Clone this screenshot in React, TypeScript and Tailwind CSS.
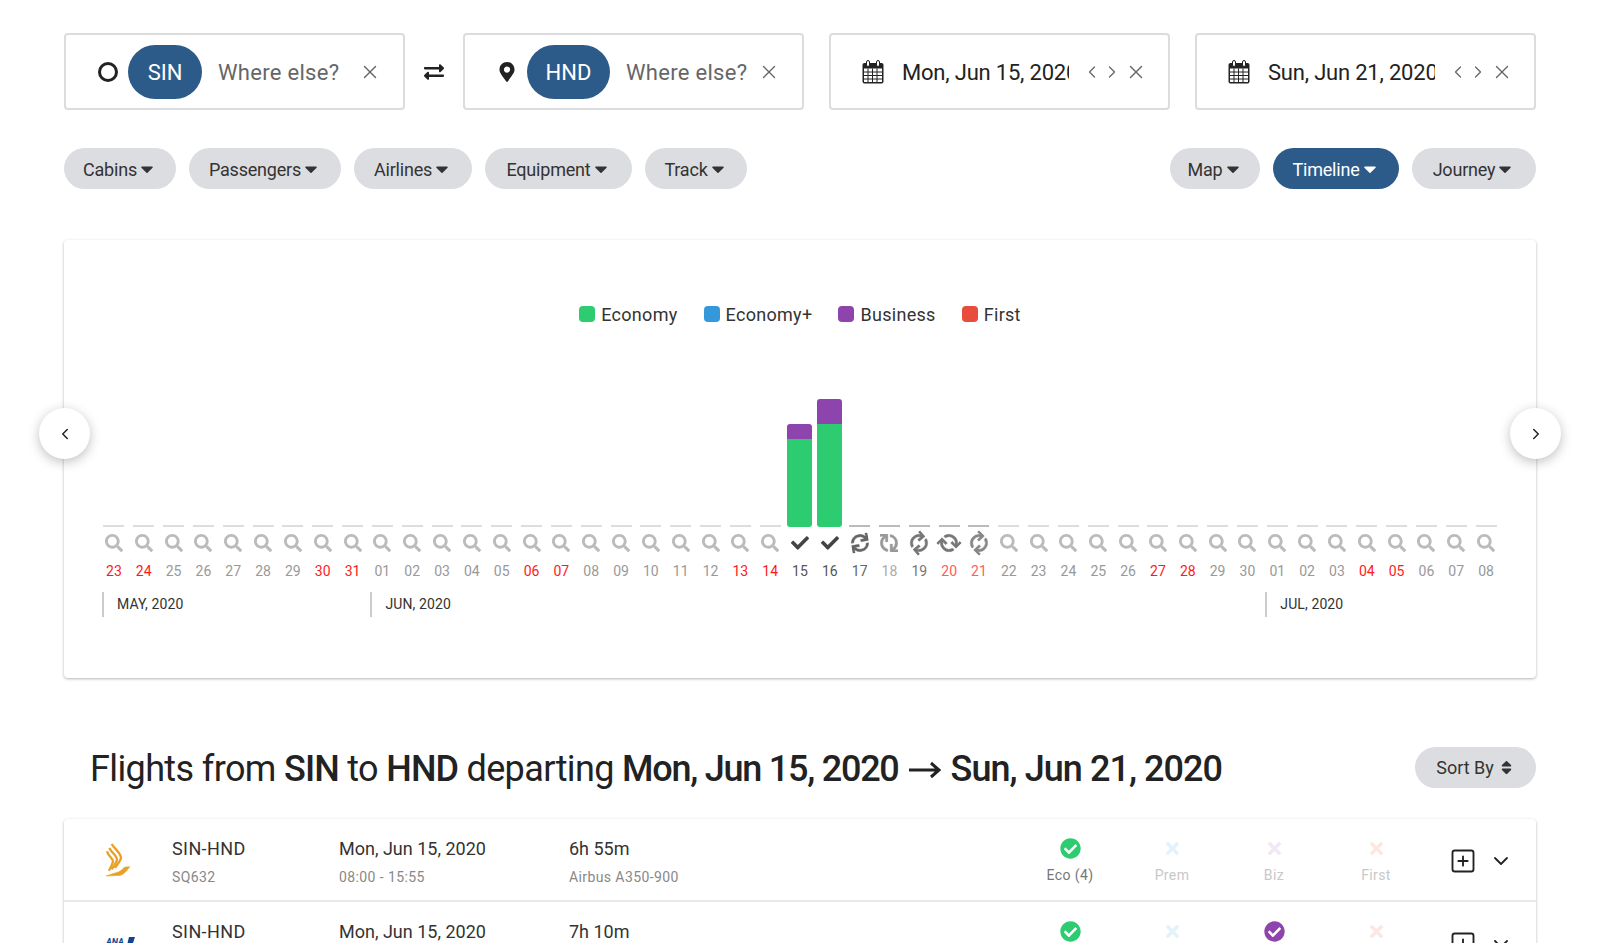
import { ChevronDown, ChevronLeft, ChevronRight, SquarePlus, X } from "lucide-react";
import {
  FaCaretDown,
  FaCheck,
  FaCheckCircle,
  FaExchangeAlt,
  FaMapMarkerAlt,
  FaSearch,
  FaSort,
  FaSync,
  FaTimes,
} from "react-icons/fa";

const may = ["23", "24", "25", "26", "27", "28", "29", "30", "31"];
const jun = Array.from({ length: 30 }, (_, i) => String(i + 1).padStart(2, "0"));
const jul = ["01", "02", "03", "04", "05", "06", "07", "08"];

// weekend columns, counted from May 23
const redDays = [0, 1, 7, 8, 14, 15, 21, 22, 28, 29, 35, 36, 42, 43];

const days = [...may, ...jun, ...jul].map((d, i) => ({ d, i, isRed: redDays.includes(i) }));

const Calendar = () => (
  <svg width="22" height="24" viewBox="0 0 22 24" className="shrink-0 text-[#222]">
    <rect x="0.5" y="3" width="21" height="20.5" rx="2" fill="currentColor" />
    <rect x="2" y="8.5" width="18" height="13.5" fill="#fff" />
    <path d="M2 12h18M2 15.5h18M2 19h18M6 8.5v13.5M10.5 8.5v13.5M15 8.5v13.5" stroke="currentColor" strokeWidth="1" />
    <rect x="4.5" y="0.5" width="3" height="6" rx="1.5" fill="#fff" stroke="currentColor" />
    <rect x="14.5" y="0.5" width="3" height="6" rx="1.5" fill="#fff" stroke="currentColor" />
  </svg>
);

const Pill = ({ label, w, active }: { label: string; w: string; active?: boolean }) => (
  <button
    className={`${w} h-[41px] pt-[1px] rounded-full flex items-center justify-center text-[18px] tracking-[-0.2px] ${
      active ? "bg-[#2c5b8a] text-white" : "bg-[#dcdde1] text-[#333]"
    }`}
  >
    {label}
    <FaCaretDown size={20} />
  </button>
);

const AirportInput = ({ code, pillW, icon }: { code: string; pillW: string; icon: React.ReactNode }) => (
  <div className="w-[341px] h-[77px] border-2 border-[#dcdcdc] rounded-[4px] flex items-center shrink-0">
    <div className="w-[62px] flex justify-end pr-[10px] shrink-0">{icon}</div>
    <span className={`${pillW} h-[54px] pt-[1px] rounded-full bg-[#2c5b8a] text-white text-[22px] flex items-center justify-center shrink-0`}>
      {code}
    </span>
    <span className="ml-[16px] pt-[2px] text-[22px] text-[#666] tracking-[0.3px] whitespace-nowrap flex-1">Where else?</span>
    <X size={22} strokeWidth={1.5} className="text-[#666] mr-[22px] shrink-0" />
  </div>
);

const DateInput = ({ value }: { value: string }) => (
  <div className="w-[341px] h-[77px] border-2 border-[#dcdcdc] rounded-[4px] flex items-center pl-[31px] shrink-0">
    <Calendar />
    <div className="ml-[18px] pt-[2px] w-[167px] overflow-hidden whitespace-nowrap text-[22px] text-[#222] tracking-[-0.2px]">{value}</div>
    <ChevronLeft size={20} strokeWidth={1.5} className="ml-[13px] text-[#666]" />
    <ChevronRight size={20} strokeWidth={1.5} className="text-[#666]" />
    <X size={22} strokeWidth={1.5} className="ml-[3px] text-[#666]" />
  </div>
);

const LegendItem = ({ color, label }: { color: string; label: string }) => (
  <div className="flex items-center gap-[6px]">
    <span className={`w-[16px] h-[16px] rounded-[4px] ${color}`} />
    <span className="text-[18px] text-[#333] tracking-[0.3px]">{label}</span>
  </div>
);

const syncStyles: Record<number, { rot: string; color: string }> = {
  25: { rot: "rotate-[-10deg]", color: "text-[#666]" },
  26: { rot: "rotate-[-90deg]", color: "text-[#999]" },
  27: { rot: "rotate-[-40deg]", color: "text-[#777]" },
  28: { rot: "rotate-[45deg]", color: "text-[#777]" },
  29: { rot: "rotate-[-45deg]", color: "text-[#888]" },
};

const DayColumn = ({ d, i, isRed }: { d: string; i: number; isRed: boolean }) => {
  let icon = <FaSearch size={18} className="text-[#bbb]" />;
  if (i === 23 || i === 24) icon = <FaCheck size={18} className="text-[#444]" />;
  if (syncStyles[i]) {
    icon = <FaSync size={18} stroke="currentColor" strokeWidth={10} className={`${syncStyles[i].rot} ${syncStyles[i].color}`} />;
  }

  let labelColor = isRed ? "text-[#ff1a1a]" : "text-[#999]";
  if (i === 23 || i === 24) labelColor = "text-[#555]";
  if (i === 25) labelColor = "text-[#666]";
  if (i === 26) labelColor = "text-[#aaa]";
  if (i === 27) labelColor = "text-[#777]";
  if (i === 28 || i === 29) labelColor = "text-[#ff5c5c]";

  return (
    <div className="flex flex-col items-center">
      <div className="h-[134px] w-full flex flex-col justify-end items-center">
        {i === 23 && (
          <>
            <div className="w-[25px] h-[15px] bg-[#8e44ad] rounded-t-[3px]" />
            <div className="w-[25px] h-[88px] bg-[#2ecc71] rounded-b-[3px]" />
          </>
        )}
        {i === 24 && (
          <>
            <div className="w-[25px] h-[25px] bg-[#8e44ad] rounded-t-[3px]" />
            <div className="w-[25px] h-[103px] bg-[#2ecc71] rounded-b-[3px]" />
          </>
        )}
        {i !== 23 && i !== 24 && (
          <div className={`w-[21px] h-[2px] ${i >= 25 && i <= 29 ? "bg-[#bbb]" : "bg-[#ddd]"}`} />
        )}
      </div>
      <div className="h-[18px] mt-[7px] flex items-center">{icon}</div>
      <div className={`mt-[10px] text-[14px] leading-[18px] ${labelColor}`}>{d}</div>
    </div>
  );
};

const Month = ({ label, span }: { label: string; span: string }) => (
  <div className={`${span} ml-[3px] h-[25px] border-l-2 border-[#ccc] pl-[13px] flex items-center text-[14px] text-[#333] tracking-[0.1px]`}>
    {label}
  </div>
);

const RoundArrow = ({ side }: { side: "left" | "right" }) => (
  <button
    className={`absolute top-[168px] w-[51px] h-[51px] rounded-full bg-white shadow-[0_3px_12px_rgba(0,0,0,0.25)] flex items-center justify-center ${
      side === "left" ? "left-[-25px]" : "right-[-25px]"
    }`}
  >
    {side === "left" ? <ChevronLeft size={18} className="text-[#222]" /> : <ChevronRight size={18} className="text-[#222]" />}
  </button>
);

const SqLogo = () => (
  <svg width="25" height="34" viewBox="35 25 75 102" fill="none" stroke="#e8a027" strokeWidth="7">
    <path d="M52 28C60 42 80 55 80 70C78 80 68 90 62 100" />
    <path d="M45 40C52 55 68 62 68 76C66 84 60 92 52 104" />
    <path d="M38 50C42 66 56 70 56 80C55 88 50 96 44 108" />
    <path d="M36 124L78 122C90 118 98 108 106 96L90 98C82 108 72 114 60 116Z" fill="#e8a027" strokeWidth="2" />
  </svg>
);

const AnaLogo = () => (
  <div className="flex items-start gap-[2px] text-[#13448f] font-bold text-[9px] leading-[10px] italic">
    ANA
    <svg width="9" height="12" viewBox="0 0 9 12">
      <path d="M3 0H9L5 12H0Z" fill="#13448f" />
    </svg>
  </div>
);

const ClassCell = ({ label, available, color, faded }: { label: string; available: boolean; color: string; faded: string }) => (
  <div className="w-[102px] pt-[3px] flex flex-col items-center shrink-0">
    <div className="h-[22px] flex items-center">
      {available ? <FaCheckCircle size={21} className={color} /> : <FaTimes size={19} className={faded} />}
    </div>
    <div className={`mt-[6px] text-[14px] leading-[20px] tracking-[0.4px] ${available ? "text-[#777]" : "text-[#c8c8c8]"}`}>{label}</div>
  </div>
);

const FlightRow = ({
  logo,
  flight,
  time,
  duration,
  plane,
  eco,
  biz,
}: {
  logo: React.ReactNode;
  flight: string;
  time: string;
  duration: string;
  plane: string;
  eco: string;
  biz: boolean;
}) => (
  <div className="h-[83px] border-b-2 border-[#e8e8e8] flex items-center shrink-0">
    <div className="w-[108px] pl-[42px] shrink-0">{logo}</div>
    <div className="w-[167px] pt-[5px] shrink-0">
      <div className="text-[18px] leading-[24px] text-[#333] tracking-[0.4px]">SIN-HND</div>
      <div className="mt-[6px] text-[14px] leading-[20px] text-[#888] tracking-[0.4px]">{flight}</div>
    </div>
    <div className="w-[230px] pt-[5px] shrink-0">
      <div className="text-[18px] leading-[24px] text-[#333]">Mon, Jun 15, 2020</div>
      <div className="mt-[6px] text-[14px] leading-[20px] text-[#888] tracking-[0.4px]">{time}</div>
    </div>
    <div className="w-[450px] pt-[5px] shrink-0">
      <div className="text-[18px] leading-[24px] text-[#333]">{duration}</div>
      <div className="mt-[6px] text-[14px] leading-[20px] text-[#888] tracking-[0.4px]">{plane}</div>
    </div>
    <ClassCell label={eco} available color="text-[#2ecc71]" faded="" />
    <ClassCell label="Prem" available={false} color="" faded="text-[#e4f2fb]" />
    <ClassCell label="Biz" available={biz} color="text-[#8e44ad]" faded="text-[#f0e8f6]" />
    <ClassCell label="First" available={false} color="" faded="text-[#fde6e4]" />
    <SquarePlus size={28} strokeWidth={1.6} className="ml-[22px] mt-[2px] text-[#222]" />
    <ChevronDown size={24} strokeWidth={1.8} className="ml-[12px] mt-[2px] text-[#222]" />
  </div>
);

const App = () => {
  return (
    <div className="h-[943px] overflow-hidden bg-white px-16 pt-[33px] font-['Roboto',sans-serif]">
      {/* search inputs */}
      <div className="flex items-center">
        <AirportInput
          code="SIN"
          pillW="w-[74px]"
          icon={<span className="block w-[20px] h-[20px] rounded-full border-[3px] border-[#222]" />}
        />
        <div className="w-[58px] flex justify-center shrink-0">
          <FaExchangeAlt size={20} className="text-[#222]" />
        </div>
        <AirportInput code="HND" pillW="w-[83px]" icon={<FaMapMarkerAlt size={20} className="text-[#222]" />} />
        <div className="ml-[25px]">
          <DateInput value="Mon, Jun 15, 2020" />
        </div>
        <div className="ml-[25px]">
          <DateInput value="Sun, Jun 21, 2020" />
        </div>
      </div>

      {/* filters */}
      <div className="mt-[38px] flex items-center gap-[13px]">
        <Pill label="Cabins" w="w-[112px]" />
        <Pill label="Passengers" w="w-[152px]" />
        <Pill label="Airlines" w="w-[118px]" />
        <Pill label="Equipment" w="w-[147px]" />
        <Pill label="Track" w="w-[102px]" />
        <div className="ml-auto flex items-center gap-[13px]">
          <Pill label="Map" w="w-[90px]" />
          <Pill label="Timeline" w="w-[126px]" active />
          <Pill label="Journey" w="w-[124px]" />
        </div>
      </div>

      {/* chart card */}
      <div className="relative mt-[51px] h-[438px] rounded-[4px] bg-white shadow-[0_1px_3px_rgba(0,0,0,0.3)] px-[35px] pt-[64px]">
        <RoundArrow side="left" />
        <RoundArrow side="right" />
        <div className="h-[20px] flex items-center justify-center gap-[26px]">
          <LegendItem color="bg-[#2ecc71]" label="Economy" />
          <LegendItem color="bg-[#3498db]" label="Economy+" />
          <LegendItem color="bg-[#8e44ad]" label="Business" />
          <LegendItem color="bg-[#e74c3c]" label="First" />
        </div>
        <div className="mt-[69px] grid grid-cols-[repeat(47,1fr)]">
          {days.map((day) => (
            <DayColumn key={day.i} d={day.d} i={day.i} isRed={day.isRed} />
          ))}
        </div>
        <div className="mt-[12px] grid grid-cols-[repeat(47,1fr)]">
          <Month label="MAY, 2020" span="col-span-9" />
          <Month label="JUN, 2020" span="col-span-30" />
          <Month label="JUL, 2020" span="col-span-8" />
        </div>
      </div>

      {/* heading */}
      <div className="mt-[69px] flex items-start justify-between pl-[26px]">
        <h1 className="pt-[2px] text-[36px] leading-[41px] text-[#222] tracking-[-0.62px] whitespace-nowrap flex items-center gap-[10px]">
          <span>
            Flights from <b className="font-medium tracking-[-0.9px]">SIN</b> to <b className="font-medium tracking-[-0.9px]">HND</b> departing{" "}
            <b className="font-medium tracking-[-1.25px]">Mon, Jun 15, 2020</b>
          </span>
          <svg width="32" height="20" viewBox="0 0 32 20" fill="none" stroke="#222" strokeWidth="3">
            <path d="M0 10H30M22 3L30 10L22 17" />
          </svg>
          <b className="font-medium tracking-[-0.95px]">Sun, Jun 21, 2020</b>
        </h1>
        <button className="w-[121px] h-[41px] rounded-full bg-[#dcdde1] text-[#333] text-[18px] flex items-center justify-center gap-[4px]">
          Sort By
          <FaSort size={17} />
        </button>
      </div>

      {/* flights */}
      <div className="mt-[29px] rounded-[4px] bg-white shadow-[0_1px_3px_rgba(0,0,0,0.3)]">
        <FlightRow
          logo={<SqLogo />}
          flight="SQ632"
          time="08:00 - 15:55"
          duration="6h 55m"
          plane="Airbus A350-900"
          eco="Eco (4)"
          biz={false}
        />
        <FlightRow
          logo={<AnaLogo />}
          flight="NH842"
          time="22:45 - 06:55"
          duration="7h 10m"
          plane="Boeing 787-9"
          eco="Eco"
          biz
        />
      </div>
    </div>
  );
};

export default App;
